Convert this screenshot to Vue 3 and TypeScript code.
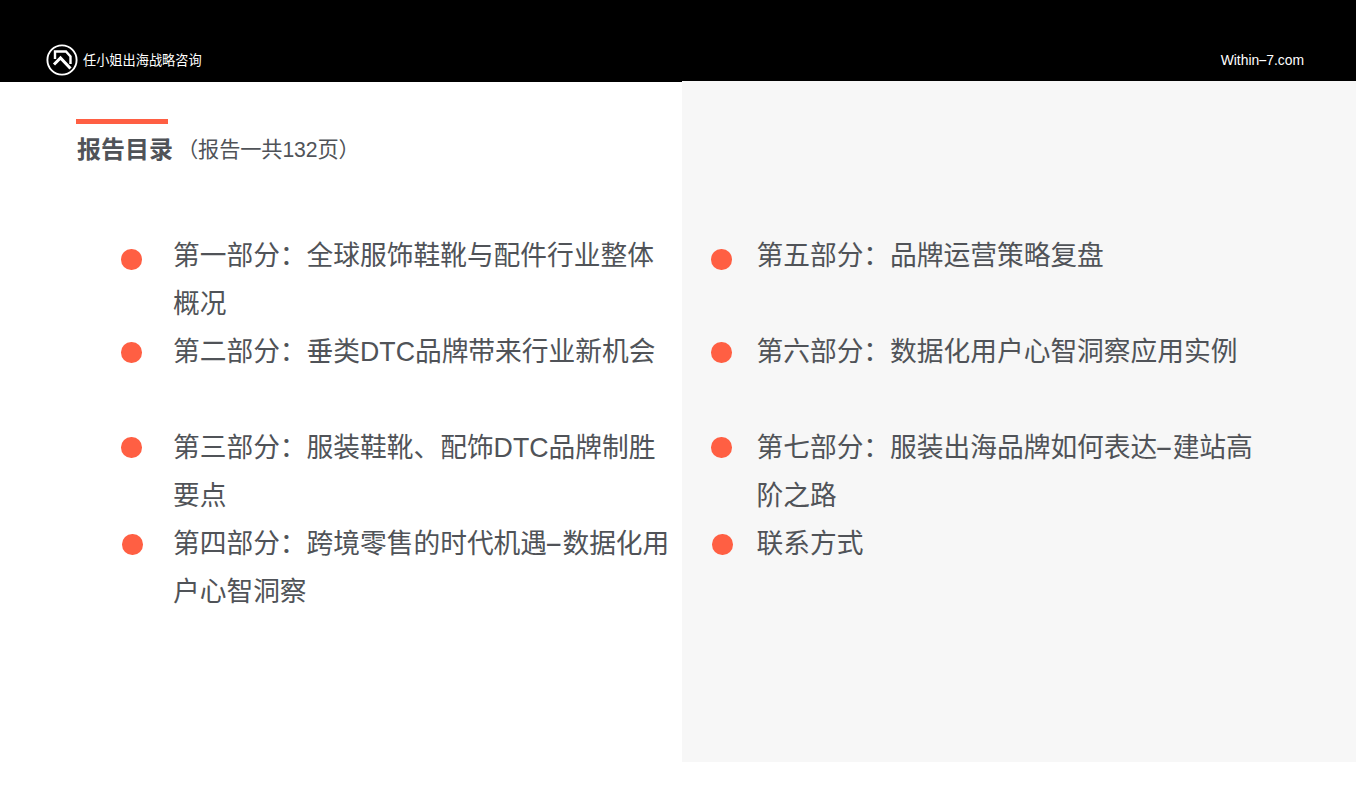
<script setup lang="ts">
const left = [
  { before: '第一部分：全球服饰鞋靴与配件行业整体概况', after: '', dot: 'a' },
  { before: '第二部分：垂类DTC品牌带来行业新机会', after: '', dot: 'b' },
  { before: '第三部分：服装鞋靴、配饰DTC品牌制胜要点', after: '', dot: 'c' },
  { before: '第四部分：跨境零售的时代机遇', after: '数据化用户心智洞察', dot: 'd' },
]
const right = [
  { before: '第五部分：品牌运营策略复盘', after: '', dot: 'a' },
  { before: '第六部分：数据化用户心智洞察应用实例', after: '', dot: 'b' },
  { before: '第七部分：服装出海品牌如何表达', after: '建站高阶之路', dot: 'c' },
  { before: '联系方式', after: '', dot: 'd' },
]
</script>

<template>
  <div class="page">
    <header class="top">
      <div class="brand">
        <svg class="logo" viewBox="0 0 32 32" width="32" height="32" aria-hidden="true">
          <circle cx="16" cy="16" r="14.6" fill="none" stroke="#fff" stroke-width="1.9" />
          <path d="M9 15 V7.5 H20 L24.5 12.5 V20" fill="none" stroke="#fff" stroke-width="2.4" />
          <path d="M8 20.5 L14.5 14 L24.5 24.5" fill="none" stroke="#fff" stroke-width="3" />
        </svg>
        <span class="name">任小姐出海战略咨询</span>
      </div>
      <span class="site">Within<span class="dash">–</span>7.com</span>
    </header>
    <main class="body">
      <section class="col-left">
        <div class="rule"></div>
        <h1 class="title"><b>报告目录</b><span>（报告一共132页）</span></h1>
        <ul class="list">
          <li v-for="item in left" :key="item.before">
            <i class="dot" :class="item.dot"></i>
            <p>{{ item.before }}<span v-if="item.after" class="dash">–</span>{{ item.after }}</p>
          </li>
        </ul>
      </section>
      <section class="col-right">
        <ul class="list">
          <li v-for="item in right" :key="item.before">
            <i class="dot" :class="item.dot"></i>
            <p>{{ item.before }}<span v-if="item.after" class="dash">–</span>{{ item.after }}</p>
          </li>
        </ul>
      </section>
    </main>
  </div>
</template>

<style>
html, body { margin: 0; background: #fff; }
</style>

<style scoped>
.page {
  width: 1356px;
  height: 796px;
  overflow: hidden;
  font-family: "Liberation Sans", "Noto Sans CJK SC", sans-serif;
  color: #505358;
}
.dash { font-family: Inter, sans-serif; line-height: 1; }
p .dash { margin-right: 2px; }
.top {
  height: 81px;
  background: #000;
  color: #fff;
  display: flex;
  justify-content: space-between;
  align-items: flex-start;
  padding: 44px 52px 0 46px;
  box-sizing: border-box;
  font-size: 13.2px;
}
.brand { display: flex; align-items: center; gap: 5px; }
.name { position: relative; top: -1px; }
.logo { display: block; }
.site { line-height: 30px; font-size: 13.9px; position: relative; top: 0.5px; }
.body { display: flex; height: 681px; }
.col-left {
  width: 682px;
  padding: 37px 0 0 76px;
  border-top: 1px solid #000;
  box-sizing: border-box;
  background: #fff;
}
.col-right { width: 674px; background: #f7f7f7; padding-top: 150px; box-sizing: border-box; }
.rule { width: 92px; height: 5px; background: #ff5f43; }
.title {
  margin: 7px 0 0 1px;
  font-size: 24px;
  line-height: 38px;
  font-weight: 400;
  display: flex;
}
.title b { font-weight: 700; }
.title span { font-size: 21.2px; margin-left: 4px; letter-spacing: -0.1px; }
.list { list-style: none; margin: 0; padding: 0; display: grid; grid-auto-rows: 96px; }
.col-left .list { margin: 62px 0 0 45px; }
.col-right .list { margin-left: 29px; }
li { display: flex; align-items: flex-start; }
.dot {
  flex: none;
  width: 20.5px;
  height: 20.5px;
  border-radius: 50%;
  background: #ff5f43;
  margin-left: 0.3px;
  margin-right: 31.2px;
}
.dot.a { margin-top: 18.4px; }
.dot.b { margin-top: 15.4px; }
.dot.c { margin-top: 14.4px; }
.dot.d { margin-top: 15.4px; transform: translateX(1px); }
.col-right .dot { margin-right: 24.7px; }
p {
  margin: 1px 0 0;
  font-size: 26.72px;
  line-height: 48px;
  width: 497px;
}
</style>
